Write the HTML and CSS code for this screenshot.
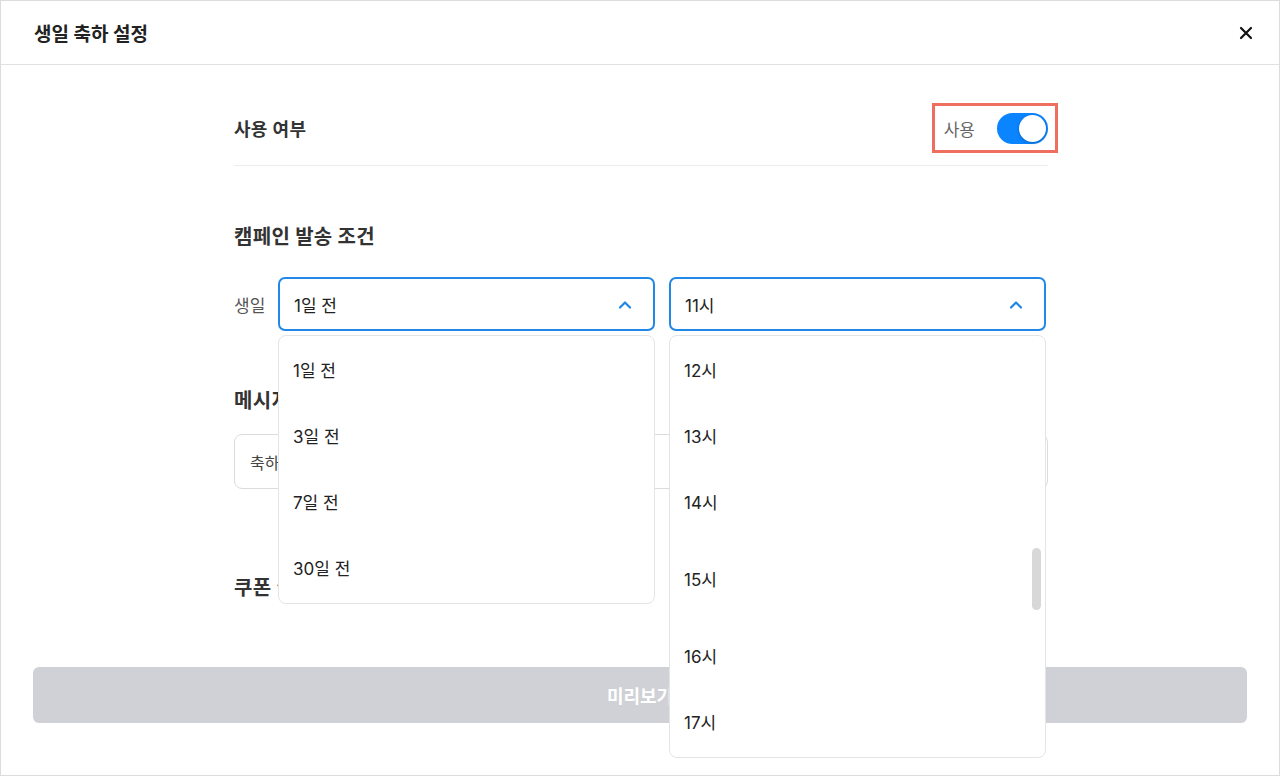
FILE: index.html
```html
<!DOCTYPE html>
<html lang="ko">
<head>
<meta charset="utf-8">
<title>생일 축하 설정</title>
<link rel="stylesheet" href="styles.css">
</head>
<body>
<div class="dialog">
  <header class="dialog-header">
    <h1 class="dialog-title">생일 축하 설정</h1>
    <button class="close-btn" aria-label="닫기">
      <svg width="14" height="14" viewBox="0 0 14 14"><path d="M2 2L12 12M12 2L2 12" stroke="#111" stroke-width="2.2" stroke-linecap="round"/></svg>
    </button>
  </header>

  <main class="dialog-body">
    <div class="column">
      <div class="usage-row">
        <span class="usage-label">사용 여부</span>
        <div class="usage-switch">
          <span class="switch-text">사용</span>
          <span class="switch on"><span class="knob"></span></span>
        </div>
      </div>

      <h2 class="section-title first">캠페인 발송 조건</h2>
      <div class="condition-row">
        <span class="condition-label">생일</span>
        <div class="select-wrap">
          <div class="select open">
            <span class="select-value">1일 전</span>
            <svg class="chevron" width="14" height="9" viewBox="0 0 14 9"><path d="M2 7.5L7 2.5L12 7.5" fill="none" stroke="#1f86e6" stroke-width="2.2" stroke-linecap="round" stroke-linejoin="round"/></svg>
          </div>
          <ul class="dropdown">
            <li class="option">1일 전</li>
            <li class="option">3일 전</li>
            <li class="option">7일 전</li>
            <li class="option">30일 전</li>
          </ul>
        </div>
        <div class="select-wrap">
          <div class="select open">
            <span class="select-value">11시</span>
            <svg class="chevron" width="14" height="9" viewBox="0 0 14 9"><path d="M2 7.5L7 2.5L12 7.5" fill="none" stroke="#1f86e6" stroke-width="2.2" stroke-linecap="round" stroke-linejoin="round"/></svg>
          </div>
          <ul class="dropdown hours">
            <li class="option">12시</li>
            <li class="option">13시</li>
            <li class="option">14시</li>
            <li class="option wide">15시</li>
            <li class="option">16시</li>
            <li class="option">17시</li>
            <li class="scroll-thumb" aria-hidden="true"></li>
          </ul>
        </div>
      </div>

      <h2 class="section-title">메시지 내용</h2>
      <div class="message-box">축하합니다! 생일을 진심으로 축하드려요.</div>

      <h2 class="section-title coupon">쿠폰 설정</h2>
    </div>
  </main>

  <footer class="dialog-footer">
    <button class="preview-btn" disabled>미리보기</button>
  </footer>
</div>
</body>
</html>
```

FILE: styles.css
```css
* {
  box-sizing: border-box;
}

html, body {
  margin: 0;
  padding: 0;
  background: #fff;
}

body {
  font-family: "Inter", "Noto Sans CJK KR", sans-serif;
  color: #222;
}

.dialog {
  width: 1280px;
  height: 776px;
  border: 1px solid #dcdcdc;
  display: flex;
  flex-direction: column;
  background: #fff;
}

.dialog-header {
  height: 64px;
  flex: none;
  border-bottom: 1px solid #e2e2e2;
  display: flex;
  align-items: center;
  justify-content: space-between;
  padding: 0 22px 0 33px;
}

.dialog-title {
  margin: 0;
  font-size: 19px;
  font-weight: 700;
  color: #222;
}

.close-btn {
  border: 0;
  background: none;
  padding: 4px;
  display: flex;
  cursor: pointer;
}

.dialog-body {
  flex: 1;
  min-height: 0;
}

.column {
  width: 814px;
  margin-left: 233px;
}

.usage-row {
  display: flex;
  align-items: center;
  justify-content: space-between;
  padding: 38px 0 12px;
  border-bottom: 1px solid #ececec;
}

.usage-label {
  font-size: 18px;
  font-weight: 600;
  color: #333;
  letter-spacing: 0.3px;
}

.usage-switch {
  display: flex;
  align-items: center;
  gap: 22px;
  height: 50px;
  padding: 0 7px 0 9px;
  margin-right: -10px;
  border: 3px solid #ee6f5f;
}

.switch-text {
  font-size: 17px;
  color: #666;
}

.switch {
  width: 51px;
  height: 31px;
  border-radius: 16px;
  background: #0a84ff;
  display: flex;
  align-items: center;
  justify-content: flex-end;
  padding: 2px;
}

.knob {
  width: 27px;
  height: 27px;
  border-radius: 50%;
  background: #fff;
  box-shadow: 0 1px 3px rgba(0, 0, 0, 0.25);
}

.section-title {
  margin: 57px 0 0;
  font-size: 20px;
  line-height: 26px;
  font-weight: 700;
  color: #333;
  letter-spacing: 0.3px;
}

.section-title.first {
  margin-top: 58px;
}

.section-title.coupon {
  margin-top: 86px;
}

.condition-row {
  display: flex;
  align-items: center;
  gap: 14px;
  margin-top: 27px;
}

.condition-label {
  flex: none;
  width: 30px;
  font-size: 17px;
  color: #555;
  white-space: nowrap;
}

.select-wrap {
  position: relative;
  flex: none;
  width: 377px;
}

.select {
  height: 54px;
  border: 2px solid #2188e8;
  border-radius: 7px;
  display: flex;
  align-items: center;
  justify-content: space-between;
  padding: 0 21px 0 14px;
  background: #fff;
}

.select-value {
  font-size: 17px;
  color: #222;
}

.dropdown {
  position: absolute;
  top: 58px;
  left: 0;
  right: 0;
  z-index: 10;
  margin: 0;
  padding: 0 0 3px;
  list-style: none;
  background: #fff;
  border: 1px solid #e4e4e7;
  border-radius: 8px;
}

.option {
  height: 66px;
  display: flex;
  align-items: center;
  padding-left: 14px;
  font-size: 17px;
  color: #222;
}

.option.wide {
  height: 88px;
}

.scroll-thumb {
  position: absolute;
  top: 212px;
  right: 4px;
  width: 9px;
  height: 62px;
  border-radius: 5px;
  background: #d8d8d8;
}

.message-box {
  margin-top: 20px;
  height: 55px;
  border: 1px solid #dcdcdc;
  border-radius: 8px;
  display: flex;
  align-items: center;
  padding-left: 15px;
  font-size: 16px;
  color: #444;
}

.dialog-footer {
  flex: none;
  padding: 0 32px 52px;
}

.preview-btn {
  width: 100%;
  height: 56px;
  border: 0;
  border-radius: 6px;
  background: #cfd1d6;
  color: #fff;
  font-family: inherit;
  font-size: 18px;
  font-weight: 600;
}
```
